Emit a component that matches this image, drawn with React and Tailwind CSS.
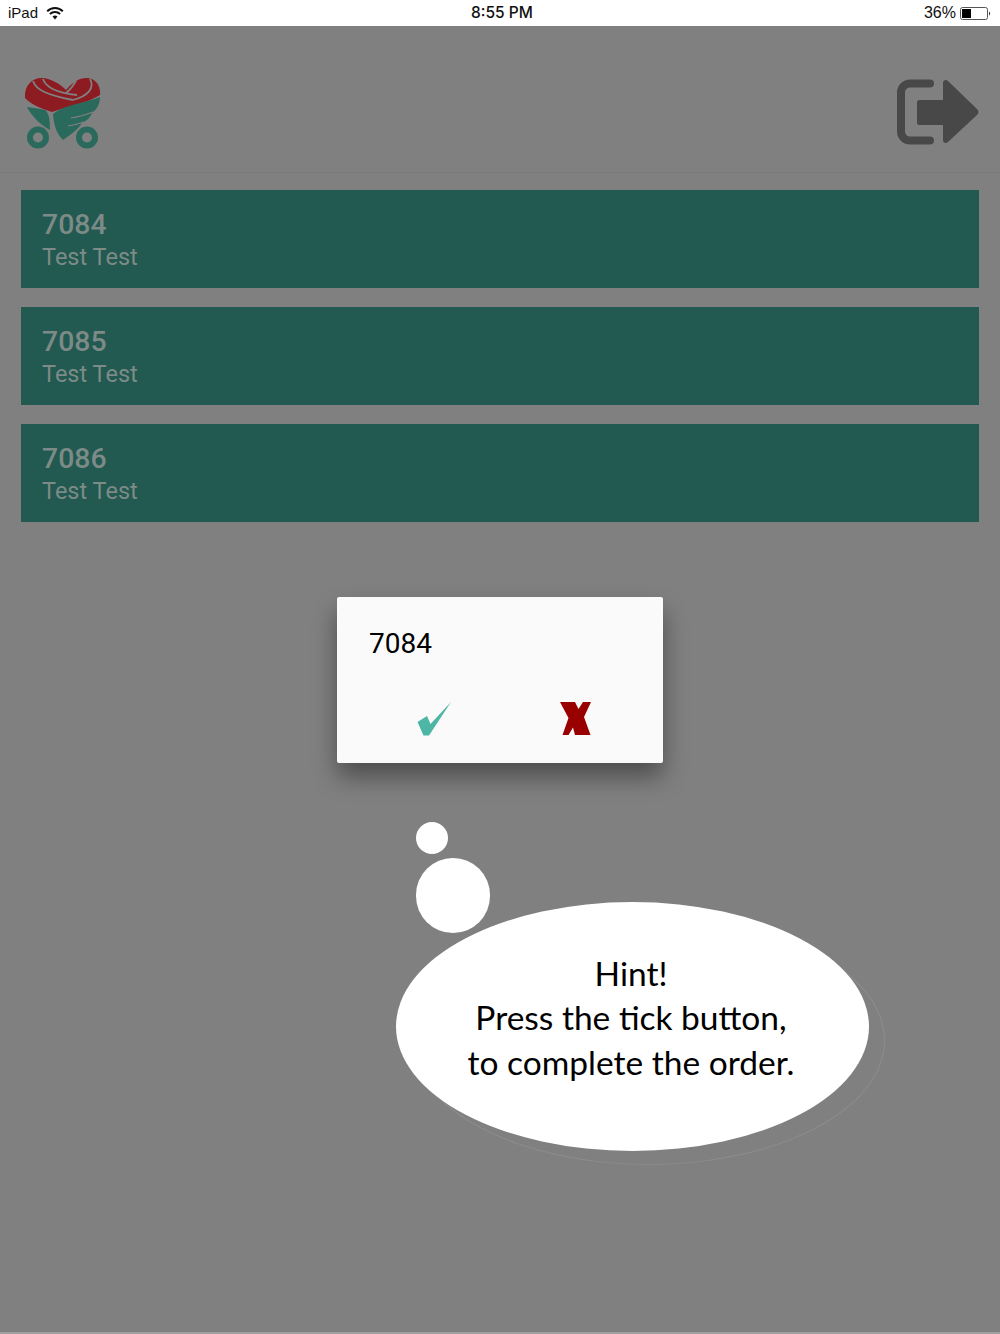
const pedidos = [
  { id: "7084", nome: "Test Test" },
  { id: "7085", nome: "Test Test" },
  { id: "7086", nome: "Test Test" },
];

function Wifi() {
  return (
    <svg width="18" height="14" viewBox="0 0 18 14" className="ml-[8px]">
      <path d="M1.2 5.2a11 11 0 0 1 15.6 0" fill="none" stroke="#111" strokeWidth="2" />
      <path d="M3.9 8a7.2 7.2 0 0 1 10.2 0" fill="none" stroke="#111" strokeWidth="2" />
      <path d="M6.5 10.6a3.6 3.6 0 0 1 5 0L9 13.4z" fill="#111" />
    </svg>
  );
}

function Battery() {
  return (
    <svg width="32" height="13" viewBox="0 0 32 13">
      <rect x="0.5" y="0.5" width="27" height="12" rx="2" fill="#fff" stroke="#555" />
      <rect x="2" y="2" width="9" height="9" fill="#000" />
      <path d="M29 4.5a2.4 2.4 0 0 1 0 4z" fill="#333" />
    </svg>
  );
}

function Logo() {
  // coordenadas da própria tela (viewBox deslocado)
  return (
    <svg width="80" height="76" viewBox="23 75 80 76">
      <path
        d="M25 98C24 85 33 77 43 78C52 79 60 84 66 90C71 84 79 77 88 78C96 79 101 86 100 95C92 100 80 104 71 106C64 108 58 110 52 112C42 109 32 105 25 98Z"
        fill="#8c1b22"
      />
      <g fill="none" stroke="#808080" strokeWidth="1.8">
        <path d="M33 81C36 90 47 95 73 100" />
        <path d="M43 79C46 88 58 93 77 95" />
        <path d="M76 81C73 86 70 90 66 93" />
        <path d="M90 79C95 88 88 96 73 100" />
      </g>
      <path d="M27 107C34 108 41 109 45 110C49 113 50 120 50 130C41 125 32 117 27 107Z" fill="#2a6a5c" />
      <path
        d="M100 97C100 105 96 110 92 113C90 118 86 121 82 123C79 128 74 132 70 135L63 140C58 135 54 128 53 114C60 108 72 105 80 103C88 101 95 99 100 97Z"
        fill="#2a6a5c"
      />
      <g fill="none" stroke="#808080" strokeWidth="1.2">
        <path d="M93 112C85 115 78 117 71 118" />
        <path d="M84 122C78 124 74 125 68 126" />
      </g>
      <circle cx="38" cy="137.5" r="8" fill="none" stroke="#2a6a5c" strokeWidth="6" />
      <circle cx="87" cy="137.5" r="8" fill="none" stroke="#2a6a5c" strokeWidth="6" />
    </svg>
  );
}

function Sair() {
  return (
    <svg width="84" height="66" viewBox="896 79 84 66">
      <path d="M930 83.5H910A9 9 0 0 0 901 92.5V131A9 9 0 0 0 910 140.500H930" fill="none" stroke="#484848" strokeWidth="8" strokeLinecap="round" />
      <path
        d="M919 100H943V83C943 80 946 79 948 81L977 109C979 111 979 113 977 115L948 142C946 144 943 143 943 140V125H919C918 125 917 124 917 123V102C917 101 918 100 919 100Z"
        fill="#484848"
      />
    </svg>
  );
}

function Tick() {
  return (
    <svg width="36" height="36" viewBox="416 701 36 36">
      <path d="M451 702L429 735.500L423.500 735.500L417.500 722L427 716L430.500 724Z" fill="#4db6a4" />
    </svg>
  );
}

function Xis() {
  return (
    <svg width="32" height="36" viewBox="560 701 32 36">
      <path d="M560 702H575L578.5 709L583 702H591L584 717L590.5 735H575L573 727.5L568.5 735H562.5L568.5 718Z" fill="#990000" />
    </svg>
  );
}

export default function App() {
  return (
    <div className="relative h-[1334px] w-[1000px] overflow-hidden bg-[#808080] flex flex-col">
      <div className="h-[26px] bg-white flex items-center justify-between pl-[8px] pr-[8px] text-[15px] text-[#111] font-['Liberation_Sans',sans-serif]">
        <div className="flex items-center w-[200px]">
          <span>iPad</span>
          <Wifi />
        </div>
        <span className="font-['Inter',sans-serif] font-medium text-[15.5px] pl-[4px]">8:55 PM</span>
        <div className="flex items-center justify-end gap-[4px] w-[200px]">
          <span className="text-[16px]">36%</span>
          <Battery />
        </div>
      </div>

      <header className="h-[147px] flex items-start justify-between pl-[23px] pr-[20px] pt-[49px] border-b border-[#7a7a7a]">
        <Logo />
        <div className="mt-[4px]">
          <Sair />
        </div>
      </header>

      <main className="flex flex-col gap-[19px] px-[21px] pt-[17px] font-['Roboto',sans-serif]">
        {pedidos.map((p) => (
          <div key={p.id} className="h-[98px] bg-[#225950] pl-[21px] pt-[19px] text-[#7c8b87]">
            <p className="text-[28.4px] leading-[32px] font-medium">{p.id}</p>
            <p className="text-[23.5px] leading-[32px]">{p.nome}</p>
          </div>
        ))}
      </main>

      {/* dialogo */}
      <div className="absolute left-[337px] top-[597px] w-[326px] h-[166px] bg-[#fafafa] rounded-[2px] shadow-[0_14px_24px_rgba(0,0,0,0.4)] font-['Roboto',sans-serif]">
        <p className="pl-[32px] pt-[30px] text-[28px] leading-[34px] text-black">7084</p>
        <div className="flex justify-between pl-[79px] pr-[71px] pt-[40px]">
          <Tick />
          <Xis />
        </div>
      </div>

      {/* balao da dica */}
      <div className="absolute left-[416px] top-[822px] w-[32px] h-[32px] rounded-full bg-white" />
      <div className="absolute left-[412px] top-[916px] w-[473px] h-[249px] rounded-[50%] border border-[#8c8c8c]" />
      <div className="absolute left-[416px] top-[858px] w-[74px] h-[75px] rounded-full bg-white" />
      <div className="absolute left-[396px] top-[902px] w-[473px] h-[249px] rounded-[50%] bg-white flex items-center justify-center pb-[18px] pr-[3px] text-center text-[33.5px] leading-[44.5px] text-black font-['Lato',sans-serif]">
        <p>
          Hint!
          <br />
          Press the tick button,
          <br />
          to complete the order.
        </p>
      </div>

      <div className="absolute left-0 bottom-0 w-full h-[2px] bg-[#a0a0a0]" />
    </div>
  );
}
